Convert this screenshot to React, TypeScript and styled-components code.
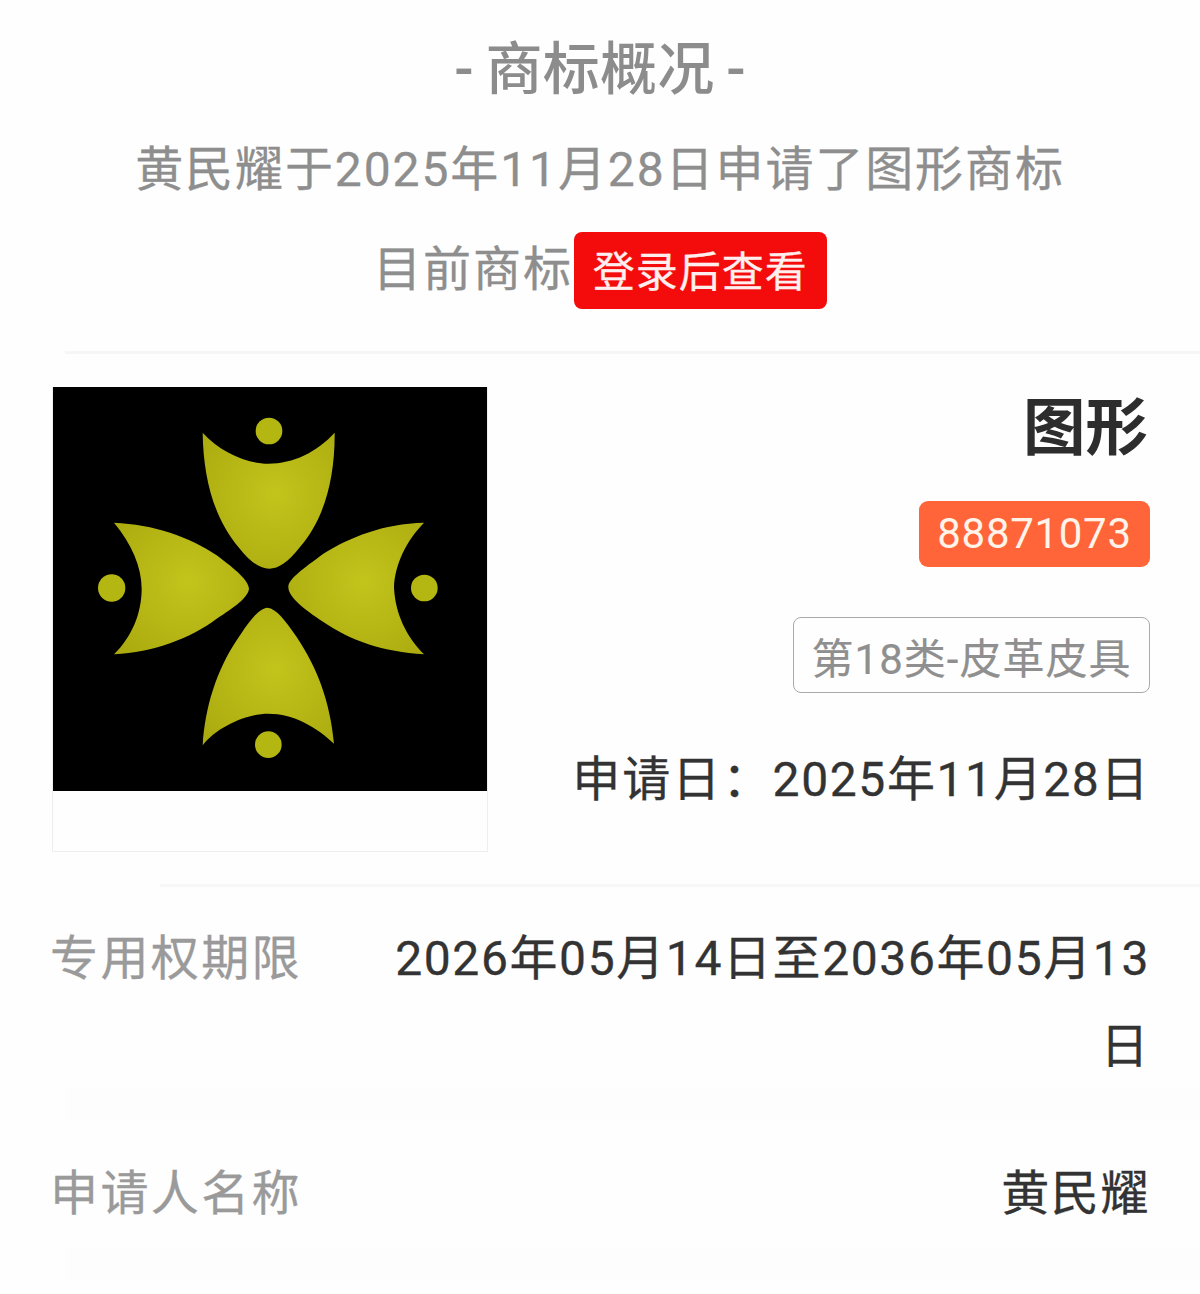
import React from "react";
import styled, { createGlobalStyle } from "styled-components";

const Global = createGlobalStyle`
  html, body { margin: 0; padding: 0; background: #fefefe; }
  body { font-family: Roboto, "Noto Sans CJK SC", sans-serif; }
`;

const Page = styled.div`
  width: 1200px;
  height: 1294px;
  overflow: hidden;
  background: #fefefe;
`;

const Summary = styled.section`
  display: flex;
  flex-direction: column;
  align-items: center;
  padding-top: 20px;
  height: 331px;
  color: #8e8e8e;
`;

const Heading = styled.h2`
  margin: 0;
  font-size: 57px;
  line-height: 100px;
  height: 100px;
  font-weight: 500;
  color: #8c8c8c;
  letter-spacing: 0.2px;
  word-spacing: -2.5px;
`;

const Sentence = styled.p`
  margin: 0;
  font-size: 48px;
  line-height: 100px;
  letter-spacing: 1.9px;
  white-space: nowrap;
  display: flex;
  align-items: center;
  -webkit-text-stroke: 0.3px currentColor;
`;

const LoginButton = styled.span`
  margin-left: 1px;
  background: #f40c0c;
  color: #ffeeee;
  border-radius: 8px;
  width: 253px;
  height: 77px;
  box-sizing: border-box;
  padding-top: 6px;
  display: inline-flex;
  align-items: center;
  justify-content: center;
  font-size: 42px;
  letter-spacing: 1px;
`;

const Overview = styled.section`
  display: flex;
  justify-content: space-between;
  padding: 33px 50px 0 52px;
  height: 530px;
  box-sizing: border-box;
`;

const Thumb = styled.div`
  width: 436px;
  height: 465px;
  box-sizing: border-box;
  border: 1px solid #eeeeee;
  border-top: none;
  background: #fefefe;
  svg { display: block; width: 434px; height: 404px; background: #000; }
`;

const Facts = styled.div`
  display: flex;
  flex-direction: column;
  align-items: flex-end;
`;

const Name = styled.h1`
  margin: 0;
  font-size: 62.5px;
  line-height: 84px;
  font-weight: 700;
  color: #2d2d2d;
  margin-right: 2px;
`;

const NumberBadge = styled.span`
  margin-top: 30px;
  width: 231px;
  height: 66px;
  padding-bottom: 2px;
  box-sizing: border-box;
  border-radius: 9px;
  background: #ff6538;
  color: #fff3ea;
  font-size: 42px;
  letter-spacing: 0.7px;
  display: flex;
  align-items: center;
  justify-content: center;
`;

const ClassBadge = styled.span`
  margin-top: 50px;
  width: 357px;
  height: 76px;
  box-sizing: border-box;
  border: 1.5px solid #aaaaaa;
  border-radius: 8px;
  color: #8f8f8f;
  font-size: 42px;
  letter-spacing: 1px;
  display: flex;
  align-items: center;
  justify-content: center;
  white-space: nowrap;
  -webkit-text-stroke: 0.2px currentColor;
`;

const ApplyDate = styled.div`
  margin-top: 43px;
  font-size: 48px;
  line-height: 88px;
  letter-spacing: 1.6px;
  color: #333;
  white-space: nowrap;
  -webkit-text-stroke: 0.3px currentColor;
`;

const DateLabel = styled.span`
  letter-spacing: 2.1px;
`;

const Divider = styled.div<{ $inset: number; $color: string; $thickness: number }>`
  height: ${(p) => p.$thickness}px;
  margin-left: ${(p) => p.$inset}px;
  background: ${(p) => p.$color};
`;

const Row = styled.div<{ $height: number; $top: number }>`
  display: flex;
  justify-content: space-between;
  align-items: flex-start;
  padding: ${(p) => p.$top}px 50px 0 52px;
  height: ${(p) => p.$height}px;
  box-sizing: border-box;
  font-size: 48px;
  line-height: 88px;
  letter-spacing: 1.6px;
  -webkit-text-stroke: 0.3px currentColor;
`;

const Label = styled.span`
  color: #9a9a9a;
  white-space: nowrap;
  margin-left: -2px;
  letter-spacing: 2.4px;
`;

const Value = styled.span`
  color: #333;
  width: 755px;
  text-align: right;
  word-break: break-all;
`;

const Mark = styled.g`
  filter: blur(0.7px);
`;

const Petal = styled.path`
  fill: url(#olive);
`;

const Dot = styled.circle`
  fill: #b4b612;
`;

function Logo() {
  return (
    <svg viewBox="40 20 1300 1212" role="img" aria-label="图形商标">
      <defs>
        <radialGradient id="olive" cx="0.55" cy="0.45" r="0.7">
          <stop offset="0" stopColor="#c3c41b" />
          <stop offset="1" stopColor="#abab10" />
        </radialGradient>
      </defs>
      <Mark>
        <Petal d="M488 157C540 215 620 250 685 250C760 250 830 215 884 157C885 300 850 420 780 500C745 545 715 565 688 565C660 565 630 545 595 500C520 410 490 290 488 157Z" />
        <Petal d="M488 1095C530 1040 620 1000 685 1000C760 1000 830 1040 882 1090C870 960 830 860 770 770C735 720 710 685 682 682C655 685 625 725 590 780C530 870 495 980 488 1095Z" />
        <Petal d="M222 427C275 490 305 560 305 625C305 700 275 770 222 822C340 815 450 775 530 715C585 680 625 650 627 625C625 600 590 570 530 525C450 470 340 432 222 427Z" />
        <Petal d="M1152 427C1100 480 1065 550 1062 620C1065 700 1100 770 1152 822C1030 815 930 780 850 725C790 685 745 650 745 620C745 595 790 565 850 520C930 470 1030 430 1152 427Z" />
        <Dot cx="687" cy="152" r="40" />
        <Dot cx="215" cy="623" r="41" />
        <Dot cx="1153" cy="623" r="40" />
        <Dot cx="685" cy="1093" r="40" />
      </Mark>
    </svg>
  );
}

export default function App() {
  return (
    <Page>
      <Global />
      <Summary>
        <Heading>- 商标概况 -</Heading>
        <Sentence>黄民耀于2025年11月28日申请了图形商标</Sentence>
        <Sentence>
          目前商标<LoginButton>登录后查看</LoginButton>
        </Sentence>
      </Summary>
      <Divider $inset={65} $color="#f6f6f6" $thickness={3} />
      <Overview>
        <Thumb>
          <Logo />
        </Thumb>
        <Facts>
          <Name>图形</Name>
          <NumberBadge>88871073</NumberBadge>
          <ClassBadge>第18类-皮革皮具</ClassBadge>
          <ApplyDate>
            <DateLabel>申请日：</DateLabel>2025年11月28日
          </ApplyDate>
        </Facts>
      </Overview>
      <Divider $inset={160} $color="#f7f7f7" $thickness={3} />
      <Row $height={201} $top={28}>
        <Label>专用权期限</Label>
        <Value>2026年05月14日至2036年05月13日</Value>
      </Row>
      <Divider $inset={65} $color="#fdfdfd" $thickness={32} />
      <Row $height={128} $top={30}>
        <Label>申请人名称</Label>
        <Value>黄民耀</Value>
      </Row>
      <Divider $inset={65} $color="#fdfdfd" $thickness={32} />
    </Page>
  );
}
